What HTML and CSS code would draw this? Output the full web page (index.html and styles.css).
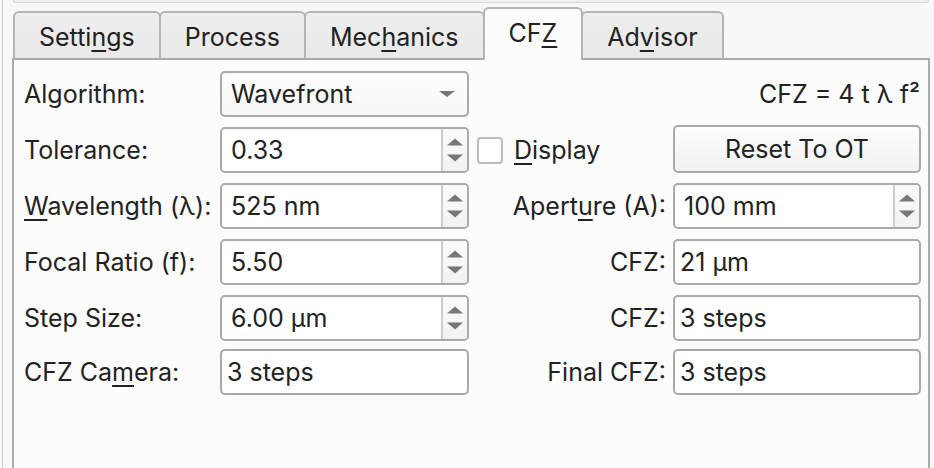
FILE: index.html
```html
<!DOCTYPE html>
<html>
<head>
<meta charset="utf-8">
<link rel="stylesheet" href="styles.css">
</head>
<body>
<div class="window">
  <div class="topstrip"></div>
  <div class="tabbar">
    <div class="tab">Setti<u>n</u>gs</div>
    <div class="tab">Process</div>
    <div class="tab">Mec<u>h</u>anics</div>
    <div class="tab active">CF<u>Z</u></div>
    <div class="tab">Ad<u>v</u>isor</div>
  </div>
  <div class="pane">
    <div class="form">
      <div class="label">Algorithm:</div>
      <div class="field combo"><span class="val">Wavefront</span>
        <svg class="drop" width="16" height="6" viewBox="0 0 16 6"><path d="M0 0H16L8 6Z" fill="#777"/></svg>
      </div>
      <div class="formula">CFZ = 4 t λ f²</div>

      <div class="label">Tolerance:</div>
      <div class="field spin"><span class="val">0.33</span><span class="arrows"><svg width="24" height="42" viewBox="0 0 24 42"><path d="M4 16.5H20L12 9.5Z" fill="#777"/><path d="M4 25.5H20L12 32.5Z" fill="#777"/></svg></span></div>
      <div class="check"><span class="box"></span><span class="check-text"><u>D</u>isplay</span></div>
      <div class="btn">Reset To OT</div>

      <div class="label"><u>W</u>avelength (λ):</div>
      <div class="field spin"><span class="val">525 nm</span><span class="arrows"><svg width="24" height="42" viewBox="0 0 24 42"><path d="M4 16.5H20L12 9.5Z" fill="#777"/><path d="M4 25.5H20L12 32.5Z" fill="#777"/></svg></span></div>
      <div class="rlabel">Apert<u>u</u>re (A):</div>
      <div class="field spin"><span class="val">100 mm</span><span class="arrows"><svg width="24" height="42" viewBox="0 0 24 42"><path d="M4 16.5H20L12 9.5Z" fill="#777"/><path d="M4 25.5H20L12 32.5Z" fill="#777"/></svg></span></div>

      <div class="label">Focal Ratio (f):</div>
      <div class="field spin"><span class="val">5.50</span><span class="arrows"><svg width="24" height="42" viewBox="0 0 24 42"><path d="M4 16.5H20L12 9.5Z" fill="#777"/><path d="M4 25.5H20L12 32.5Z" fill="#777"/></svg></span></div>
      <div class="rlabel">CFZ:</div>
      <div class="field line">21 µm</div>

      <div class="label">Step Size:</div>
      <div class="field spin"><span class="val">6.00 µm</span><span class="arrows"><svg width="24" height="42" viewBox="0 0 24 42"><path d="M4 16.5H20L12 9.5Z" fill="#777"/><path d="M4 25.5H20L12 32.5Z" fill="#777"/></svg></span></div>
      <div class="rlabel">CFZ:</div>
      <div class="field line">3 steps</div>

      <div class="label">CFZ Ca<u>m</u>era:</div>
      <div class="field line">3 steps</div>
      <div class="rlabel">Final CFZ:</div>
      <div class="field line">3 steps</div>
    </div>
  </div>
</div>
</body>
</html>
```
FILE: styles.css
```css
* { box-sizing: border-box; }
html, body { margin: 0; padding: 0; }
body {
  width: 934px;
  height: 468px;
  overflow: hidden;
  background: #f8f8f8;
  font-family: Inter, "Noto Sans", sans-serif;
  font-size: 25px;
  color: #222222;
}
u {
  text-decoration: underline;
  text-decoration-thickness: 1.5px;
  text-underline-offset: 4px;
}
.window {
  margin-left: 2px;
  border-left: 1px solid #cbcbcb;
  height: 468px;
  padding-left: 9px;
  padding-right: 4px;
  display: flex;
  flex-direction: column;
}
.topstrip {
  height: 3px;
  margin: 0 1px;
  border: 1px solid #d8d8d8;
  border-top: none;
  border-radius: 0 0 4px 4px;
  background: #f1f1f1;
}
.tabbar {
  display: flex;
  align-items: flex-end;
  margin-top: 4px;
  padding-left: 1px;
  height: 51px;
  position: relative;
  z-index: 1;
}
.tab {
  height: 47px;
  padding: 3px 24px 0;
  border: 2px solid #b5b5b5;
  border-bottom: none;
  border-radius: 6px 6px 0 0;
  background: linear-gradient(#eeeeee, #e9e9e9);
  display: flex;
  align-items: center;
  justify-content: center;
  margin-left: -2px;
  white-space: nowrap;
}
.tab:first-child { margin-left: 0; }
.tab.active {
  height: 53px;
  margin-bottom: -2px;
  padding-bottom: 6px;
  background: #fcfcfc;
}
.pane {
  flex: 1;
  border: 2px solid #ababab;
  border-bottom: none;
  background: #fcfcfc;
  padding: 11px 7px 0 10px;
}
.form {
  display: grid;
  grid-template-columns: 196px 249px 1fr 248px;
  grid-template-rows: repeat(5, 46px) 46px;
  row-gap: 10px;
  align-items: center;
}
.form > :nth-last-child(-n+4) { margin-top: -4px; }
.label { white-space: nowrap; }
.rlabel {
  text-align: right;
  padding-right: 7px;
  white-space: nowrap;
}
.formula {
  grid-column: 3 / 5;
  text-align: right;
  padding-right: 1px;
}
.field {
  height: 46px;
  border: 2px solid #a9a9a9;
  border-radius: 5px;
  background: #fefefe;
  display: flex;
  align-items: center;
  white-space: nowrap;
}
.combo {
  padding: 0 12px 0 9px;
  justify-content: space-between;
  background: linear-gradient(#fefefe, #f7f7f7);
}
.spin .val {
  flex: 1;
  padding-left: 9px;
}
.spin .arrows {
  width: 26px;
  height: 100%;
  border-left: 2px solid #cdcdcd;
  background: linear-gradient(#fbfbfb, #f1f1f1);
  border-radius: 0 3px 3px 0;
  display: flex;
  align-items: center;
  justify-content: center;
}
.line { padding-left: 5px; }
.check {
  display: flex;
  align-items: center;
  padding-left: 8px;
}
.box {
  width: 26px;
  height: 27px;
  border: 2px solid #bdbdbd;
  border-radius: 4px;
  background: #fff;
  margin-right: 11px;
}
.btn {
  height: 48px;
  margin-top: -2px;
  border: 2px solid #a9a9a9;
  border-radius: 5px;
  background: linear-gradient(#fdfdfd, #f1f1f1);
  display: flex;
  align-items: center;
  justify-content: center;
}
```
